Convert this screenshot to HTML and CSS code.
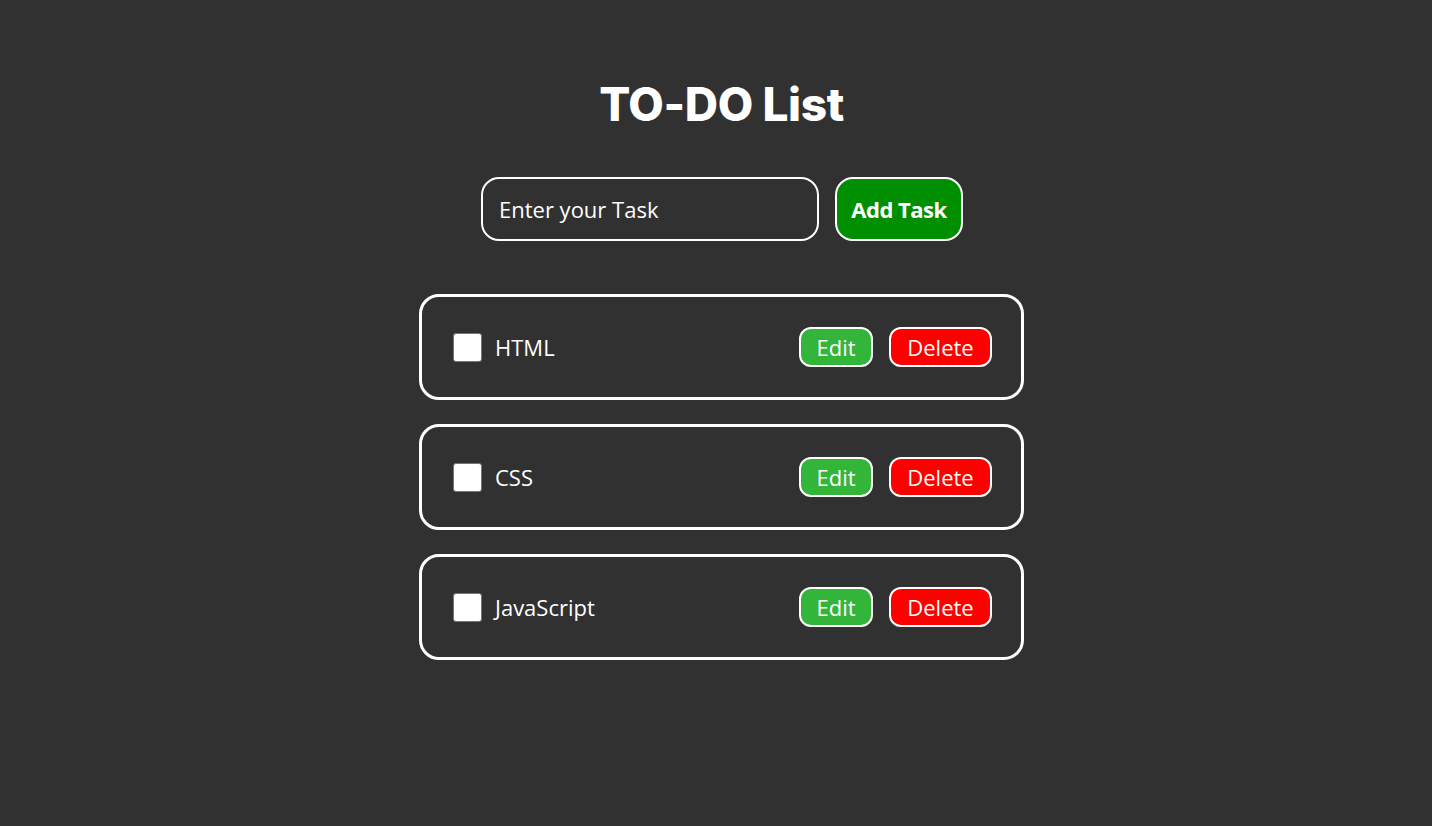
FILE: index.html
```html
<!DOCTYPE html>
<html lang="en">
<head>
<meta charset="utf-8">
<title>TO-DO List</title>
<link rel="stylesheet" href="styles.css">
</head>
<body>
<main class="app">
  <h1 class="title">TO-DO List</h1>
  <form class="add-form">
    <input class="task-input" type="text" placeholder="Enter your Task">
    <button class="add-btn" type="button">Add Task</button>
  </form>
  <ul class="task-list">
    <li class="task">
      <label class="task-label"><span class="check"></span><span class="task-text">HTML</span></label>
      <div class="actions"><button class="btn edit" type="button">Edit</button><button class="btn delete" type="button">Delete</button></div>
    </li>
    <li class="task">
      <label class="task-label"><span class="check"></span><span class="task-text">CSS</span></label>
      <div class="actions"><button class="btn edit" type="button">Edit</button><button class="btn delete" type="button">Delete</button></div>
    </li>
    <li class="task">
      <label class="task-label"><span class="check"></span><span class="task-text">JavaScript</span></label>
      <div class="actions"><button class="btn edit" type="button">Edit</button><button class="btn delete" type="button">Delete</button></div>
    </li>
  </ul>
</main>
</body>
</html>
```
FILE: styles.css
```css
html, body {
  margin: 0;
  padding: 0;
  background: #313131;
  color: #fff;
  font-family: "Open Sans", "Noto Sans", sans-serif;
}
.app {
  display: flex;
  flex-direction: column;
  align-items: center;
  padding-top: 78px;
  padding-left: 11px;
}
.title {
  margin: 0;
  font-family: Inter, "Open Sans", sans-serif;
  font-weight: 800;
  font-size: 46px;
  line-height: 52px;
  letter-spacing: -0.4px;
}
.add-form {
  display: flex;
  gap: 16px;
  margin-top: 47px;
  margin-left: 1px;
}
.task-input {
  box-sizing: border-box;
  width: 338px;
  height: 64px;
  border: 2px solid #fff;
  border-radius: 18px;
  background: transparent;
  color: #fff;
  font-family: "Open Sans", sans-serif;
  font-size: 22px;
  padding: 0 16px;
  outline: none;
}
.task-input::placeholder {
  color: #fff;
  opacity: 1;
}
.add-btn {
  box-sizing: border-box;
  width: 128px;
  height: 64px;
  border: 2px solid #fff;
  border-radius: 18px;
  background: #008f00;
  color: #fff;
  font-family: "Open Sans", sans-serif;
  font-weight: 700;
  font-size: 22px;
  letter-spacing: -0.5px;
  padding: 0;
}
.task-list {
  list-style: none;
  margin: 53px 0 0;
  padding: 0;
  display: flex;
  flex-direction: column;
  gap: 24px;
}
.task {
  box-sizing: border-box;
  width: 605px;
  height: 106px;
  border: 3px solid #fff;
  border-radius: 20px;
  display: flex;
  align-items: center;
  justify-content: space-between;
  padding: 0 29px 0 31px;
}
.task-label {
  display: flex;
  align-items: center;
  gap: 13px;
}
.check {
  box-sizing: border-box;
  width: 29px;
  height: 29px;
  background: #fff;
  border: 1px solid #767676;
  border-radius: 3px;
}
.task-text {
  font-size: 22px;
}
.actions {
  display: flex;
  gap: 16px;
}
.btn {
  box-sizing: border-box;
  height: 40px;
  border: 2px solid #fff;
  border-radius: 12px;
  color: #fff;
  font-family: "Open Sans", sans-serif;
  font-size: 22px;
  padding: 0;
}
.edit {
  width: 74px;
  background: #33b53a;
}
.delete {
  width: 103px;
  background: #ff0000;
}
```
